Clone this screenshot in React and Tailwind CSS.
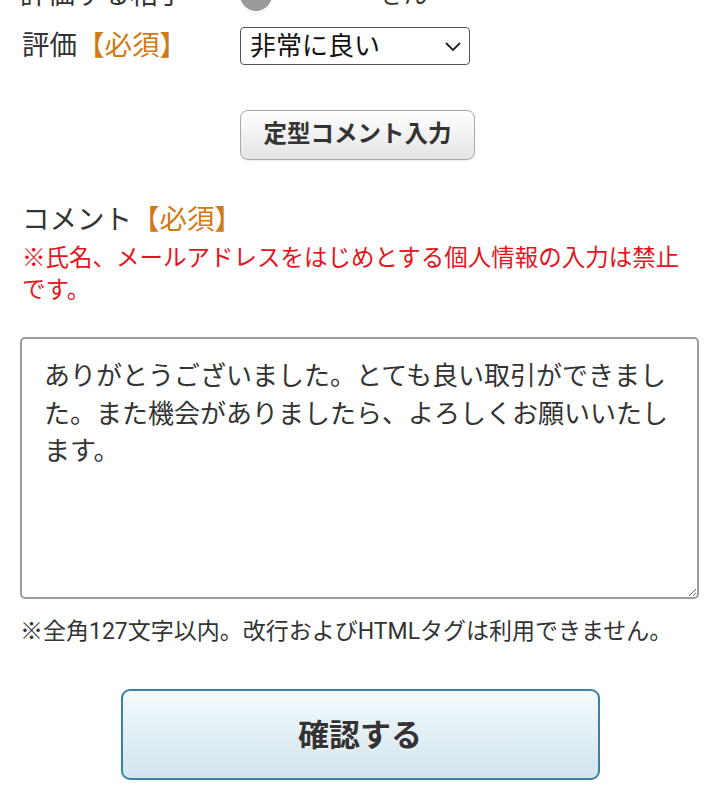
import React from "react";

const font = { fontFamily: "Roboto, 'Noto Sans CJK JP', sans-serif" };

function Required() {
    return <span className="text-[#cf7a14]">【必須】</span>;
}

function RatingRows() {
    return (
        <div>
            <div className="-mt-[24px] flex h-[38px] items-center">
                <div className="w-[220px] text-[27.5px] leading-none">評価する相手</div>
                <div className="h-[32px] w-[32px] rounded-full bg-[#9a9a9a]"></div>
                <div className="ml-[108px] text-[24px] leading-none">さん</div>
            </div>
            <div className="mt-[13px] flex h-[38px] items-center">
                <div className="w-[220px] pl-[2px] text-[27.5px] leading-none">
                    評価<Required />
                </div>
                <div className="relative">
                    <select
                        defaultValue="5"
                        className="h-[38px] w-[230px] appearance-none rounded-[4px] border-[1.5px] border-[#555] bg-white pl-[9px] text-[26px] leading-none text-[#111]"
                        style={font}
                    >
                        <option value="5">非常に良い</option>
                        <option value="4">良い</option>
                        <option value="3">普通</option>
                        <option value="2">悪い</option>
                        <option value="1">非常に悪い</option>
                    </select>
                    <svg className="pointer-events-none absolute right-[8px] top-[14px]" width="18" height="11" viewBox="0 0 18 11" fill="none">
                        <path d="M2 2 L9 9 L16 2" stroke="#222" strokeWidth="1.8" />
                    </svg>
                </div>
            </div>
        </div>
    );
}

function App() {
    return (
        <div className="h-[794px] w-[720px] overflow-hidden bg-white px-[20px] text-[#333]" style={font}>
            <RatingRows />

            <div className="mt-[45px] flex justify-center pr-[5px]">
                <button
                    type="button"
                    className="h-[50px] w-[235px] rounded-[8px] border-[1.5px] border-[#a8a8a8] bg-gradient-to-b from-white to-[#e4e4e4] text-[23.5px] font-bold text-[#333] shadow-[0_1px_1px_rgba(0,0,0,0.08)]"
                >
                    定型コメント入力
                </button>
            </div>

            <div className="mt-[42px] pl-[2px] text-[27.5px] leading-[36px]">
                コメント<Required />
            </div>
            <p className="mt-[4px] pl-[2px] text-[23.5px] leading-[32px] text-[#e5141c]">
                ※氏名、メールアドレスをはじめとする個人情報の入力は禁止です。
            </p>

            <textarea
                readOnly
                defaultValue="ありがとうございました。とても良い取引ができました。また機会がありましたら、よろしくお願いいたします。"
                className="mt-[31px] block h-[262px] w-[679px] rounded-[5px] border-2 border-[#9b9b9b] px-[22px] pt-[19px] text-[26px] leading-[37.5px] text-[#333] outline-none"
                style={font}
            />

            <p className="mt-[17px] text-[23px] leading-[32px] text-[#333]">
                ※全角127文字以内。改行およびHTMLタグは利用できません。
            </p>

            <div className="mt-[41px] flex justify-center">
                <button
                    type="button"
                    className="h-[91px] w-[479px] rounded-[9px] border-2 border-[#3b82a5] bg-gradient-to-b from-[#f3fafd] to-[#d2e5ee] pt-[4px] text-[31px] font-bold text-[#333] [text-shadow:0_1px_1px_#fff]"
                >
                    確認する
                </button>
            </div>
        </div>
    );
}

export default App;
